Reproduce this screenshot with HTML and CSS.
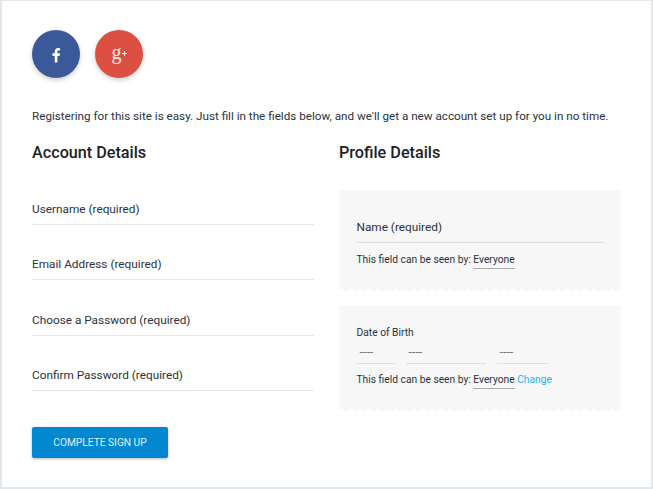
FILE: index.html
```html
<!DOCTYPE html>
<html lang="en">
<head>
<meta charset="utf-8">
<title>Register</title>
<link rel="stylesheet" href="styles.css">
</head>
<body>
<main class="card">
  <div class="social">
    <a class="circle fb" href="#"><svg class="fb-icon" viewBox="0 0 24 24" width="24" height="24"><path fill="#fff" d="M13.4 19.5v-6.6h2.2l.35-2.6H13.4V8.7c0-.75.2-1.25 1.28-1.25h1.37V5.13c-.24-.03-1.05-.1-2-.1-1.97 0-3.33 1.2-3.33 3.42v1.85H8.5v2.6h2.22v6.6z"/></svg></a>
    <a class="circle gp" href="#"><span class="gp-g">g</span><svg class="gp-plus" viewBox="0 0 5 5" width="5" height="5"><path fill="#fdeeec" d="M2 0h1v2h2v1H3v2H2V3H0V2h2z"/></svg></a>
  </div>
  <p class="intro">Registering for this site is easy. Just fill in the fields below, and we'll get a new account set up for you in no time.</p>
  <div class="columns">
    <section class="account">
      <h2>Account Details</h2>
      <div class="fields">
        <div class="field">Username (required)</div>
        <div class="field">Email Address (required)</div>
        <div class="field">Choose a Password (required)</div>
        <div class="field">Confirm Password (required)</div>
      </div>
      <button class="submit" type="button">COMPLETE SIGN UP</button>
    </section>
    <section class="profile">
      <h2>Profile Details</h2>
      <div class="panel panel-name">
        <div class="name-field">Name (required)</div>
        <p class="vis">This field can be seen by: <span class="who">Everyone</span></p>
      </div>
      <div class="panel panel-dob">
        <div class="dob-label">Date of Birth</div>
        <div class="dob">
          <span class="sel sel-d">----</span>
          <span class="sel sel-m">----</span>
          <span class="sel sel-y">----</span>
        </div>
        <p class="vis">This field can be seen by: <span class="who">Everyone</span> <a class="change" href="#">Change</a></p>
      </div>
    </section>
  </div>
</main>
</body>
</html>
```
FILE: styles.css
```css
* { box-sizing: border-box; }
html, body { margin: 0; height: 100%; }
body {
  background: #e4e7ea;
  font-family: Roboto, "Liberation Sans", sans-serif;
  color: #2a323c;
  padding: 1px 2px 2px 2px;
  overflow: hidden;
}
.card {
  background: #fff;
  height: 486px;
  padding: 29px 30px 0;
}
.social { display: flex; gap: 15px; }
.circle {
  width: 48px;
  height: 48px;
  border-radius: 50%;
  display: flex;
  align-items: center;
  justify-content: center;
  box-shadow: 0 2px 5px rgba(0,0,0,.2);
  color: #fff;
  text-decoration: none;
}
.fb { background: #3b5998; }
.fb-icon { margin: 1px 1px 0 0; }
.gp { background: #dd4f42; font-family: "Liberation Serif", serif; }
.gp-g { font-size: 20px; line-height: 1; margin-top: -4px; color: #fdeeec; }
.gp-plus { margin-top: -2px; }
.intro { margin: 30px 0 0; font-size: 11.68px; line-height: 17px; white-space: nowrap; }
.columns { display: flex; margin-top: 16px; }
.account { width: 282px; margin-right: 25px; }
.profile { width: 282px; }
h2 { margin: 0; font-size: 16.2px; font-weight: 500; line-height: 24px; color: #1c2127; }
.fields { margin-top: 24px; }
.field {
  font-size: 11.8px;
  line-height: 17px;
  height: 36px;
  padding-top: 12px;
  border-bottom: 1px solid #e6e6e6;
  margin-bottom: 19.4px;
}
.submit {
  display: block;
  margin-top: 36px;
  width: 136px;
  height: 31px;
  border: 0;
  border-radius: 2px;
  background: #0288d1;
  color: #e0f0fa;
  font: 400 10.2px Roboto, sans-serif;
  box-shadow: 0 1px 3px rgba(0,0,0,.3);
}
.panel {
  position: relative;
  background: #f7f7f7;
  padding: 0 17.5px;
}
.panel::after {
  content: "";
  position: absolute;
  left: 0;
  right: 0;
  bottom: 0;
  height: 3px;
  background: radial-gradient(circle at 3px 4px, #fff 2.6px, transparent 3px) 0 0 / 9px 3px repeat-x;
}
.panel-name { margin-top: 25px; height: 101px; padding-top: 29px; }
.name-field {
  font-size: 11.8px;
  line-height: 17px;
  height: 24px;
  width: 248px;
  border-bottom: 1px solid #e0e0e0;
}
.vis { margin: 9px 0 0; font-size: 10.25px; line-height: 16px; white-space: nowrap; }
.who { display: inline-block; border-bottom: 1px solid #aaa; }
.change { color: #2cb0f2; text-decoration: none; }
.panel-dob { margin-top: 15px; height: 105px; padding-top: 19px; }
.dob-label { font-size: 10.25px; line-height: 15px; }
.dob { display: flex; margin-top: 3px; }
.sel {
  height: 21px;
  padding: 1px 3px 0;
  font-size: 12.5px;
  line-height: 16px;
  color: #777;
  border-bottom: 1px solid #e0e0e0;
}
.sel-d { width: 38px; margin-right: 11px; }
.sel-m { width: 80px; margin-right: 11px; }
.sel-y { width: 51px; }
.panel-dob .vis { margin-top: 8px; }
```
